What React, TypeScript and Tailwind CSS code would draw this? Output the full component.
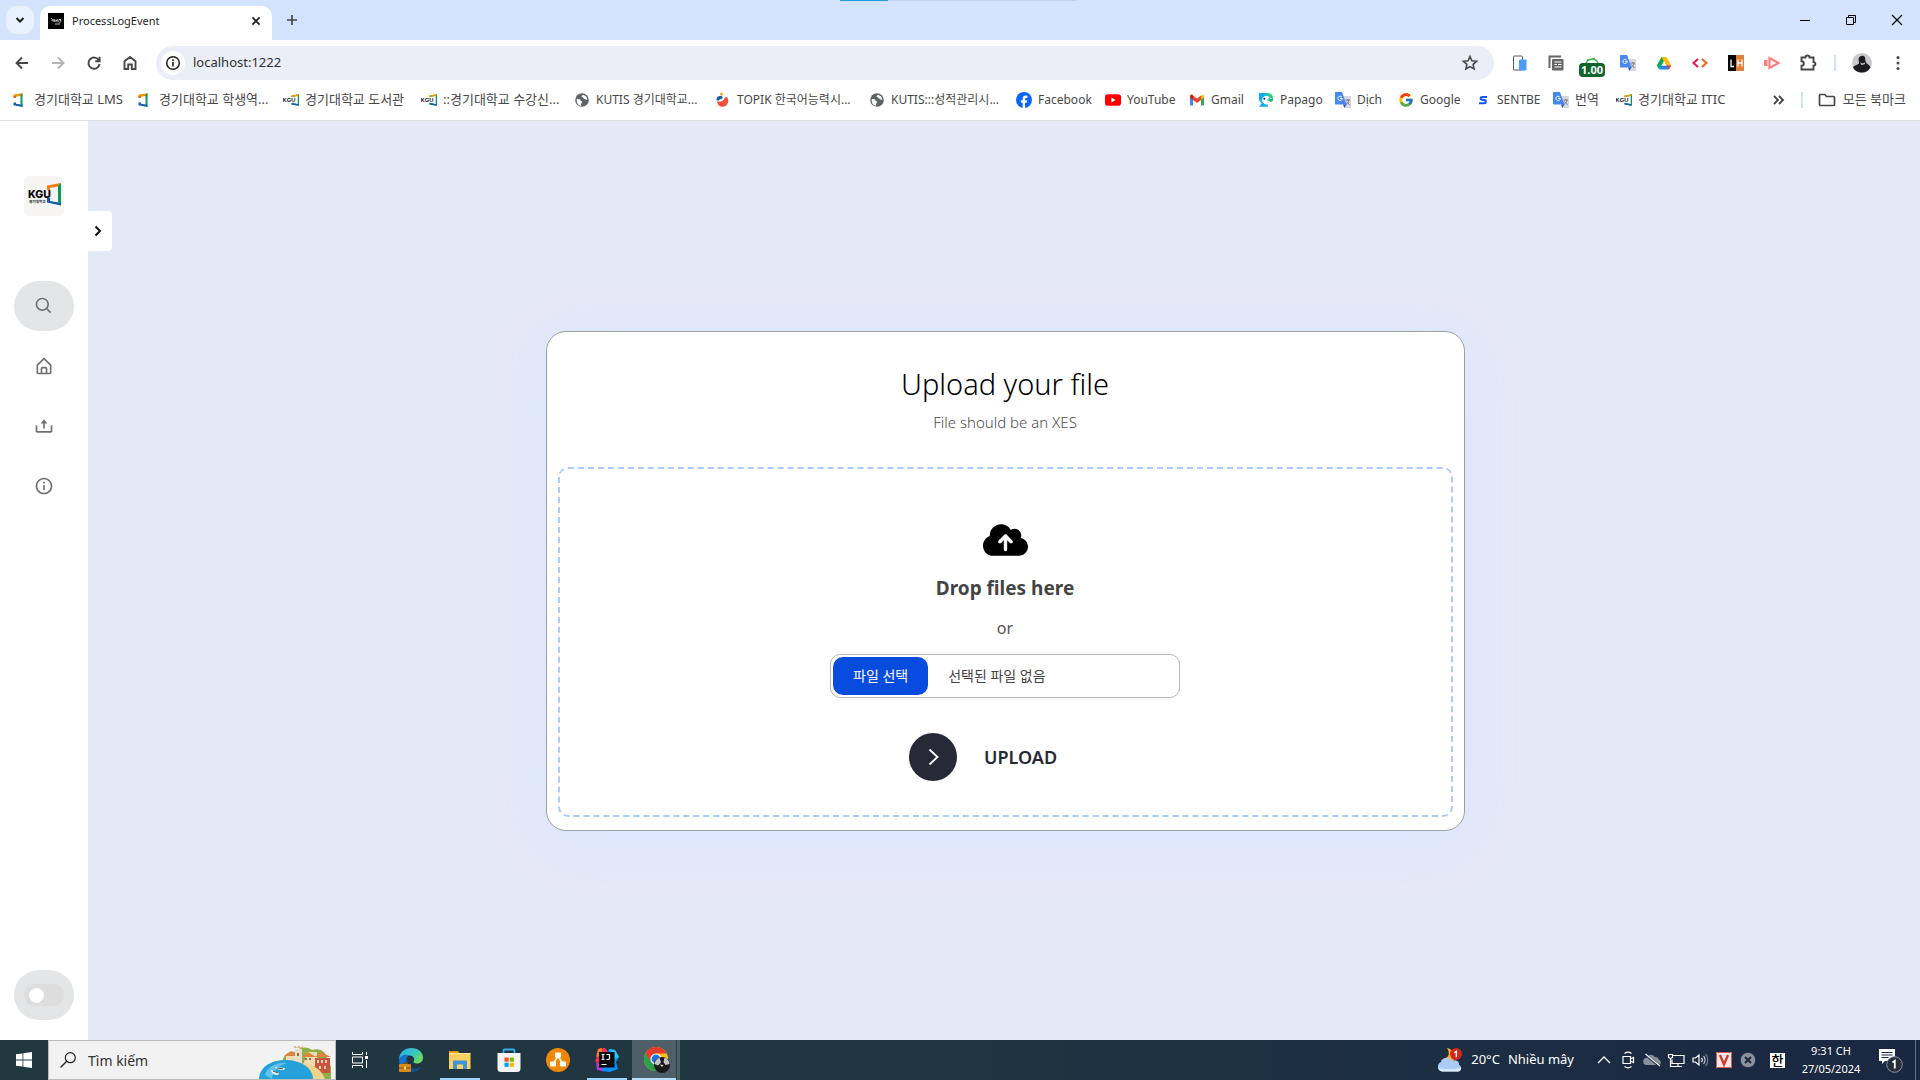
import React, { useState } from "react";
import { FaCloudArrowUp } from "react-icons/fa6";
import { FcGoogle } from "react-icons/fc";

/* ---------- small drawings ---------- */

type IconProps = { className?: string };

const Gate = ({ className = "size-4" }: IconProps) => (
  <svg viewBox="0 0 16 16" className={className} aria-hidden="true">
    <path d="M1.500 2.600 10.500 1.200v2.600L4 4.800v1H1.500z" fill="#f39800" />
    <path d="M1.500 4.200H4v1.600H1.500z" fill="#e5522b" />
    <path d="M8.500 2.400 10.500 1.200v13.800L8.500 13.200z" fill="#0a9a57" />
    <path d="M1.500 10.600H4v1.200l6.500 1V15L1.500 13.200z" fill="#1560ac" />
  </svg>
);

const KguMark = ({ className = "size-4" }: IconProps) => (
  <svg viewBox="0 0 16 16" className={className} aria-hidden="true">
    <path d="M8.500 4.400 15.400 3v10l-6.900-1.400" fill="none" stroke="#0a9a57" strokeWidth="1.400" />
    <path d="M8.500 4.400 15.400 3" stroke="#f39800" strokeWidth="1.600" />
    <path d="M8.500 11.600 15.400 13" stroke="#1560ac" strokeWidth="1.600" />
    <text x="-.4" y="10.2" fontSize="5.800" fontWeight="900" fontFamily="Liberation Sans" fill="#111">KGU</text>
  </svg>
);

const Globe = () => (
  <svg viewBox="0 0 16 16" className="size-4" aria-hidden="true">
    <circle cx="8" cy="8" r="6.800" fill="#5f6368" />
    <path d="M2.700 7c1.800.2 3.500 0 3.800 1.400.2 1 1.800.4 1.700 1.700-.1 1-1.300 1.100-1.200 2.600.1.800-.4 1.200-.9 1C3.600 12.800 2.300 10 2.700 7z" fill="#fff" />
    <path d="M8.700 2.900c-1 .8-1.500 1.400-.7 2.100.9.700 1.300.3 1.700 1.200.4 1 1.500.7 2.200 1.300.6.5 1.100.5 1.400.1C13.300 4.900 11 3 8.700 2.900z" fill="#fff" />
  </svg>
);

const Topik = () => (
  <svg viewBox="0 0 16 16" className="size-4" aria-hidden="true">
    <circle cx="6.500" cy="2.200" r="1.400" fill="#f5a623" />
    <path d="M1.500 7c0-2 2-3.300 4.200-3.100 2 .2 2.600 1.400 1.600 2.400C6 7.500 4.400 7 3.800 8.600 2.400 8.800 1.500 8.300 1.500 7z" fill="#17599c" />
    <path d="M2.500 9.300c2.500.7 6 .2 7-3.300.6-1.200 2.200-1.400 3-.2 1.600 2.600.7 6.500-2 8.200-2.600 1.500-5.800.6-7.200-1.300-.8-1-1.300-2.900-.8-3.400z" fill="#f0503c" />
  </svg>
);

const Facebook = () => (
  <svg viewBox="0 0 16 16" className="size-4" aria-hidden="true">
    <circle cx="8" cy="8" r="8" fill="#0866ff" />
    <path d="M6.700 16v-5.300H4.900V8.200h1.800V7.100c0-2.500 1.100-3.500 3.300-3.500.4 0 1.100.1 1.400.2v2.100h-.9c-1.100 0-1.500.5-1.500 1.500v.8h2.200l-.4 2.500H9v5.300z" fill="#fff" />
  </svg>
);

const YouTube = () => (
  <svg viewBox="0 0 16 16" className="size-4" aria-hidden="true">
    <rect y="2.300" width="16" height="11.400" rx="2.800" fill="#f00" />
    <path d="M6.400 5.600v4.800L10.600 8z" fill="#fff" />
  </svg>
);

const Gmail = () => (
  <svg viewBox="0 0 16 16" className="size-4" aria-hidden="true">
    <path d="M1 4v8.700c0 .5.400.8.800.8H4V7z" fill="#4285f4" />
    <path d="M12 7v6.500h2.200c.5 0 .8-.4.800-.8V4z" fill="#34a853" />
    <path d="M12 3.400 15 3v2.200L12 8z" fill="#fbbc04" />
    <path d="M4 8V3.400l4 3 4-3V8l-4 3z" fill="#ea4335" />
    <path d="M1 4.200C1 2.700 2.700 2 3.800 3L4 3.200V8L1 5.600z" fill="#c5221f" />
  </svg>
);

const Papago = () => (
  <svg viewBox="0 0 16 16" className="size-4" aria-hidden="true">
    <path d="M1 1h8c3 0 5 1.500 5.700 4L9 8l1 6.800H1L3.500 11.500 1 8z" fill="#12a9f5" />
    <path d="M7 1h2c3.500 0 5.800 2.300 6 5.500l-4-1.500z" fill="#22d86b" />
    <path d="M4 8a4.300 4.300 0 0 1 7.500-2.800L8.800 8l4.200 1.500c-1 3-4 3.800-6.500 2.500S4 9.500 4 8z" fill="#fff" />
    <path d="m9 8 6-2c.4 2.400-.6 3.500-2 4z" fill="#10c060" />
    <circle cx="6.300" cy="6.800" r="1" fill="#123" />
  </svg>
);

const Translate = () => (
  <svg viewBox="0 0 16 16" className="size-4" aria-hidden="true">
    <path d="M6.500 4H15c.6 0 1 .4 1 1v10c0 .6-.4 1-1 1H9.500z" fill="#d5d8dc" />
    <path d="M1 0h6l4.500 12.500H1c-.6 0-1-.4-1-1V1c0-.6.400-1 1-1z" fill="#4688f1" />
    <path d="M8 12.500h3.500L9.300 16z" fill="#2a56c6" />
    <path d="M10.500 8H15M12.700 7v1M14 8c-.3 2-1.500 3.500-3 4.300M11.700 9.500c.6 1.400 1.800 2.600 3 3" stroke="#667" fill="none" strokeWidth=".8" />
    <path d="M6.700 4.900a2.200 2.200 0 1 0 .6 1.500H5" stroke="#fff" fill="none" strokeWidth="1" />
  </svg>
);

const Sentbe = () => (
  <svg viewBox="0 0 16 16" className="size-4" aria-hidden="true">
    <path d="M12 5H7.500c-2.400 0-2.500 2.800-.2 3h1.900c2.300.1 2.200 3.200-.2 3.200H4" fill="none" stroke="#1556f5" strokeWidth="2" />
  </svg>
);

const Folder = () => (
  <svg viewBox="0 0 20 16" className="h-4 w-5" aria-hidden="true">
    <path d="M3 2.500h4.800L9.600 4.500H16.500a1 1 0 0 1 1 1v7a1 1 0 0 1-1 1h-13a1 1 0 0 1-1-1V3.500z" fill="none" stroke="#474747" strokeWidth="1.700" strokeLinejoin="round" />
  </svg>
);

const Line = ({ d, className = "size-5", w = 1.8 }: { d: string; className?: string; w?: number }) => (
  <svg viewBox="0 0 20 20" className={className} fill="none" stroke="currentColor" strokeWidth={w} aria-hidden="true">
    <path d={d} />
  </svg>
);

const Solid = ({ d, className = "size-5" }: { d: string; className?: string }) => (
  <svg viewBox="0 0 24 24" className={className} fill="currentColor" aria-hidden="true">
    <path d={d} />
  </svg>
);

/* ---------- browser frame ---------- */

function TabStrip() {
  return (
    <div className="relative flex h-10 items-end bg-[#d3e3fd]">
      <div className="absolute top-0 left-[840px] flex h-px w-[236px] bg-[#c3d3ea]">
        <span className="w-12 bg-[#1a9fdb]" />
      </div>
      <button aria-label="Search tabs" className="mb-1.5 ml-1.5 flex size-7 items-center justify-center rounded-[10px] bg-[#e9f1fe] text-[#1f1f1f]">
        <Line d="m6.500 8 3.500 3.500L13.500 8" className="size-5" w={2} />
      </button>
      <div className="ml-1.5 flex h-[34px] w-58 items-center rounded-t-[10px] bg-white px-2 pb-1">
        <svg viewBox="0 0 16 16" className="size-4" aria-hidden="true">
          <rect width="16" height="16" />
          <path d="M3 5c1 2 2 2 3 2M3.500 7.500 6 8M6 6l1 3M8 6.500v2.500M8 8l2-1.500v3M11 6.500h2M11 9c1 .6 2 0 2-1s-2-.8-2-1.500M7 11h5" stroke="#ddd" fill="none" strokeWidth=".9" />
        </svg>
        <span className="ml-2 flex-1 text-[11px] text-[#1f1f1f]">ProcessLogEvent</span>
        <button aria-label="Close tab" className="text-[#1f1f1f]">
          <Line d="m5.500 5.500 9 9M14.500 5.500l-9 9" className="size-4" w={2.200} />
        </button>
      </div>
      <button aria-label="New tab" className="mb-2.5 ml-2.5 text-[#474747]">
        <Line d="M10 5v10M5 10h10" w={1.700} />
      </button>
      <div className="ml-auto flex h-10 text-black">
        <button aria-label="Minimize" className="flex w-[46px] items-center justify-center">
          <Line d="M5 10.500h10" w={1} />
        </button>
        <button aria-label="Restore" className="flex w-[46px] items-center justify-center">
          <Line d="M5.500 7.500h7v7h-7zM7.500 7V5.500h7v7H13" w={1} />
        </button>
        <button aria-label="Close" className="flex w-[46px] items-center justify-center">
          <Line d="m5 5 10 10M15 5 5 15" w={1.100} />
        </button>
      </div>
    </div>
  );
}

const extensions = [
  {
    name: "Device preview",
    art: (
      <>
        <rect x="1.500" y="1" width="9" height="14" rx="1" fill="#fff" stroke="#4a5a78" />
        <rect x="7" y="4.500" width="7.500" height="11" rx="1" fill="#4d9df8" />
      </>
    ),
  },
  {
    name: "Copy",
    art: (
      <>
        <path d="M1.500 13V1.500H13" fill="none" stroke="#666" strokeWidth="2" />
        <rect x="4" y="4" width="11.500" height="11.500" rx="1" fill="#666" />
        <path d="M6.500 7h7M10 9.500h3.500M6.500 12h7M6.500 9.500H9" stroke="#fff" strokeWidth="1.200" />
      </>
    ),
  },
  { name: "Speed", art: null },
  { name: "Translate", art: null },
  {
    name: "Drive",
    art: (
      <>
        <path d="M5.500 2h5L5.300 11 3.200 14.500.8 10.500z" fill="#0da95f" />
        <path d="M5.500 2h5l4.700 8.500h-5z" fill="#ffba00" />
        <path d="M5.500 10.500h9.700L12.800 14.500H3.200z" fill="#2684fc" />
        <path d="M12 13.500 10.200 10.500h5L12.800 14.500z" fill="#ea4335" />
        <path d="M8 6.300 5.700 10.500h4.700z" fill="#fff" />
      </>
    ),
  },
  {
    name: "Code",
    art: (
      <>
        <path d="M6 4 1.500 8 6 12" fill="none" stroke="#e4145c" strokeWidth="2" />
        <path d="M10 4l4.500 4-4.500 4" fill="none" stroke="#f0601c" strokeWidth="2" />
      </>
    ),
  },
  {
    name: "LH",
    art: (
      <>
        <path d="M0 0h8v16H0z" fill="#000" />
        <path d="M8 0h8v16H8z" fill="#e0803a" />
        <path d="M3 4.500v7h3M10 4.500v7M14 4.500v7M10 8h4" fill="none" stroke="#fff" strokeWidth="1.300" />
      </>
    ),
  },
  {
    name: "Recorder",
    art: (
      <>
        <path d="M0 5h3.500v6H0z" fill="#ff7d7d" />
        <path d="M5.500 3v10L14.500 8z" fill="none" stroke="#ff7d7d" strokeWidth="2.200" />
      </>
    ),
  },
];

function Toolbar() {
  return (
    <div className="flex h-[46px] items-center bg-white px-3 text-[#474747]">
      <div className="flex gap-4">
        <button aria-label="Back"><Line d="M16 10H5M10 4.500 4.500 10l5.500 5.500" w={1.900} /></button>
        <button aria-label="Forward" className="text-[#b4b4b4]"><Line d="M4 10h11M10 4.500l5.500 5.500-5.500 5.500" w={1.900} /></button>
        <button aria-label="Reload"><Line d="M15 7.500A5.600 5.600 0 1 0 15.600 11M15.600 3.800v4.400h-4.400" w={1.900} /></button>
        <button aria-label="Home"><Line d="M4.500 16V8.200L10 4l5.500 4.200V16h-3.700v-4.500H8.200V16z" w={1.900} /></button>
      </div>
      <div className="ml-4 flex h-[34px] flex-1 items-center rounded-full bg-[#ebeef7] pr-3.5 pl-[5px]">
        <button aria-label="Site information" className="flex size-6 items-center justify-center rounded-full bg-white text-[#1f1f1f]">
          <svg viewBox="0 0 16 16" className="size-4" aria-hidden="true">
            <circle cx="8" cy="8" r="6.300" fill="none" stroke="currentColor" strokeWidth="1.500" />
            <path d="M8 7v4.500M8 4.300V6" stroke="currentColor" strokeWidth="1.600" />
          </svg>
        </button>
        <input aria-label="Address" defaultValue="localhost:1222" className="ml-2 flex-1 bg-transparent text-[13px] text-[#303030] outline-none" />
        <button aria-label="Bookmark this page">
          <Line d="m10 3.500 1.900 4.300 4.700.5-3.500 3.100 1 4.600-4.100-2.400L5.900 16l1-4.600-3.500-3.100 4.700-.5z" w={1.600} />
        </button>
      </div>
      <div className="ml-3.5 flex items-center gap-3">
        {extensions.map((e) => (
          <button key={e.name} aria-label={e.name} className="flex size-6 items-center justify-center">
            {e.name === "Translate" ? (
              <Translate />
            ) : e.name === "Speed" ? (
              <span className="flex flex-col items-center pt-2">
                <svg viewBox="0 0 16 6" className="h-1.5 w-4" aria-hidden="true">
                  <path d="M2 6c2-5 10-5 12 0M3 3l8-1.500" fill="none" stroke="#4caf50" strokeWidth="1.400" />
                </svg>
                <span className="rounded-[4px] bg-[#0d652d] px-0.5 text-[11px] leading-[14px] font-bold text-white">1.00</span>
              </span>
            ) : (
              <svg viewBox="0 0 16 16" className="size-4" aria-hidden="true">{e.art}</svg>
            )}
          </button>
        ))}
        <button aria-label="Extensions" className="flex size-6 items-center justify-center">
          <Line d="M3.500 4.500h4a2 2 0 0 1 4 0H15.500v4.600a1.800 1.800 0 0 1 0 3.600V16.500h-12v-3.700a2.300 2.300 0 0 0 0-4.600z" w={1.900} />
        </button>
      </div>
      <span className="ml-3.5 h-4 w-0.5 bg-[#d3e3fd]" />
      <button aria-label="Profile" className="ml-4">
        <svg viewBox="0 0 20 20" className="size-5" aria-hidden="true">
          <circle cx="10" cy="10" r="10" fill="#c9c9cb" />
          <path d="M1 14.500c2-3 4-2 6-4 .4-2-1.500-4.500.5-6.500 2-2 5-1.500 5.500.5.2 1.500.2 3 .7 4.500 1 2 3.300 2.500 4.800 5.300A10 10 0 0 1 1 14.500z" fill="#1c1c20" />
          <path d="M8 9c1 1.500 3 2 4.500.5l.5 1.500-3.500 1z" fill="#e6dad4" />
        </svg>
      </button>
      <button aria-label="Menu" className="ml-4">
        <svg viewBox="0 0 20 20" className="size-5" fill="currentColor" aria-hidden="true">
          <circle cx="10" cy="4.500" r="1.500" /><circle cx="10" cy="10" r="1.500" /><circle cx="10" cy="15.500" r="1.500" />
        </svg>
      </button>
    </div>
  );
}

const bookmarks = [
  { label: "경기대학교 LMS", icon: <Gate />, style: "w-[125px] text-[13px]" },
  { label: "경기대학교 학생역...", icon: <Gate />, style: "w-[146px] text-[13px]" },
  { label: "경기대학교 도서관", icon: <KguMark />, style: "w-[138px] text-[13px]" },
  { label: "::경기대학교 수강신...", icon: <KguMark />, style: "w-[153px] text-[13px]" },
  { label: "KUTIS 경기대학교...", icon: <Globe />, style: "w-[141px]" },
  { label: "TOPIK 한국어능력시...", icon: <Topik />, style: "w-[154px]" },
  { label: "KUTIS:::성적관리시...", icon: <Globe />, style: "w-[147px]" },
  { label: "Facebook", icon: <Facebook />, style: "w-[89px]" },
  { label: "YouTube", icon: <YouTube />, style: "w-[84px]" },
  { label: "Gmail", icon: <Gmail />, style: "w-[69px]" },
  { label: "Papago", icon: <Papago />, style: "w-[77px]" },
  { label: "Dịch", icon: <Translate />, style: "w-[63px]" },
  { label: "Google", icon: <FcGoogle className="size-4" />, style: "w-[77px]" },
  { label: "SENTBE", icon: <Sentbe />, style: "w-[78px]" },
  { label: "번역", icon: <Translate />, style: "w-[63px] text-[13px]" },
  { label: "경기대학교 ITIC", icon: <KguMark />, style: "w-[125px] text-[13px]" },
];

function Bookmarks() {
  return (
    <nav aria-label="Bookmarks" className="flex h-[35px] items-center border-b border-[#dfe1e5] bg-white pr-3.5 pb-1.5 pl-3 text-[12px] text-[#474747]">
      {bookmarks.map((b) => (
        <a key={b.label} href="#" className={`flex shrink-0 items-center gap-1.5 whitespace-nowrap ${b.style}`}>
          <span className="shrink-0">{b.icon}</span>
          {b.label}
        </a>
      ))}
      <button aria-label="More bookmarks" className="ml-auto">
        <Line d="m5 6 4 4-4 4M10 6l4 4-4 4" w={1.900} />
      </button>
      <span className="ml-3 h-4 w-0.5 bg-[#d3e3fd]" />
      <a href="#" className="ml-3.5 flex items-center gap-1.5 text-[13px] whitespace-nowrap">
        <Folder />모든 북마크
      </a>
    </nav>
  );
}

/* ---------- page ---------- */

const navItems = [
  { label: "Home", d: "M5 22h14a2 2 0 0 0 2-2v-9a1 1 0 0 0-.29-.71l-8-8a1 1 0 0 0-1.410 0l-8 8A1 1 0 0 0 3 11v9a2 2 0 0 0 2 2zm5-2v-5h4v5zm-5-8.590 7-7 7 7V20h-3v-5a2 2 0 0 0-2-2h-4a2 2 0 0 0-2 2v5H5z" },
  { label: "Upload", d: "M11 15h2V9h3l-4-5-4 5h3zM20 18H4v-7H2v7c0 1.103.897 2 2 2h16c1.103 0 2-.897 2-2v-7h-2z" },
  { label: "Information", d: "M12 2C6.486 2 2 6.486 2 12s4.486 10 10 10 10-4.486 10-10S17.514 2 12 2zm0 18c-4.411 0-8-3.589-8-8s3.589-8 8-8 8 3.589 8 8-3.589 8-8 8zM11 11h2v6h-2zM11 7h2v2h-2z" },
];

function Sidebar() {
  return (
    <aside className="relative flex w-22 shrink-0 flex-col items-center bg-white pt-[55px] pb-5 text-[#707070]">
      <div className="flex size-10 items-center justify-center rounded-md bg-[#f6f5f4]">
        <svg viewBox="0 0 40 40" className="size-10" role="img" aria-label="KGU">
          <path d="M23 9.500 37 7v3l-11 2v2h-3z" fill="#ee7f1a" />
          <path d="M34 10l3-3v22l-3-3z" fill="#0a9a57" />
          <path d="M23 22h3v3l11 2v2.500L23 26.500z" fill="#1358a5" />
          <text x="4" y="21.800" fontSize="10.500" fontWeight="800" fontFamily="Inter" fill="#000">KGU</text>
          <text x="5" y="26.500" fontSize="3.600" fontWeight="700" fontFamily="Noto Sans CJK KR" fill="#222">경기대학교</text>
        </svg>
      </div>
      <button aria-label="Expand sidebar" className="absolute top-[90px] left-full z-10 flex h-10 w-6 items-center rounded-r-[4px] bg-white text-[#11101d]">
        <Line d="m7.500 5.500 4.500 4.500-4.500 4.500" w={2} />
      </button>
      <button aria-label="Search" className="mt-[65px] flex h-[50px] w-15 items-center justify-center rounded-[25px] bg-[#e4e5e6]">
        <Solid d="M10 18a7.952 7.952 0 0 0 4.897-1.688l4.396 4.396 1.414-1.414-4.396-4.396A7.952 7.952 0 0 0 18 10c0-4.411-3.589-8-8-8s-8 3.589-8 8 3.589 8 8 8zm0-14c3.309 0 6 2.691 6 6s-2.691 6-6 6-6-2.691-6-6 2.691-6 6-6z" />
      </button>
      <nav className="mt-2.5 flex flex-col gap-2.5">
        {navItems.map((n) => (
          <a key={n.label} href="#" aria-label={n.label} className="flex h-[50px] w-15 items-center justify-center">
            <Solid d={n.d} />
          </a>
        ))}
      </nav>
      <label className="mt-auto flex h-[50px] w-15 cursor-pointer items-center justify-center rounded-[25px] bg-[#e4e5e6]">
        <input type="checkbox" role="switch" aria-label="Dark mode" className="peer sr-only" />
        <span className="flex h-[22px] w-10 items-center rounded-full bg-[#ddd] pl-[5px] peer-checked:justify-end">
          <span className="size-[15px] rounded-full bg-white" />
        </span>
      </label>
    </aside>
  );
}

function UploadCard() {
  const [fileName, setFileName] = useState("선택된 파일 없음");
  return (
    <form
      onSubmit={(e) => e.preventDefault()}
      className="w-full max-w-[919px] rounded-[20px] border border-[#9f9f9f] bg-white px-[11px] pt-[30px] pb-[13px] text-center shadow-[0_10px_60px_rgb(218,229,255)]"
    >
      <h1 className="text-[29px] leading-[44px] font-light text-black">Upload your file</h1>
      <p className="mt-1.5 text-[15px] leading-5 font-light text-[#4c4c4c]">File should be an XES</p>
      <div className="mt-[35px] flex flex-col items-center rounded-[10px] border-2 border-dashed border-[#abcaff] pt-[53px] pb-[34px]">
        <FaCloudArrowUp className="h-9 w-[45px] text-black" />
        <p className="mt-3.5 text-[19px] leading-8 font-bold text-[#444]">Drop files here</p>
        <p className="mt-3 text-[16px] leading-6 text-[#555]">or</p>
        <label className="mt-3.5 flex h-11 w-[350px] cursor-pointer items-center rounded-[10px] border border-[#b9b9b9] p-0.5 text-[14px] text-[#444]">
          <input
            type="file"
            accept=".xes"
            className="sr-only"
            onChange={(e) => setFileName(e.target.files?.[0]?.name ?? "선택된 파일 없음")}
          />
          <span className="flex h-[38px] items-center rounded-[10px] bg-[#084cdf] px-5 text-white">파일 선택</span>
          <span className="ml-5">{fileName}</span>
        </label>
        <button type="submit" className="mt-[35px] flex w-48 items-center">
          <span className="flex size-12 items-center justify-center rounded-full bg-[#282936] text-white">
            <Line d="m6.500 2.500 8 7.500-8 7.500" className="size-5" w={1.800} />
          </span>
          <span className="ml-[27px] text-[18px] leading-6 font-semibold text-[#282936]">UPLOAD</span>
        </button>
      </div>
    </form>
  );
}

/* ---------- task bar ---------- */

const EdgeIcon = () => (
  <svg viewBox="0 0 24 24" className="size-6" aria-hidden="true">
    <defs>
      <linearGradient id="edgeTop" x1="0" y1="0" x2="1" y2=".6"><stop offset="0" stopColor="#2fa8e8" /><stop offset=".6" stopColor="#35c6c4" /><stop offset="1" stopColor="#6bdc5e" /></linearGradient>
    </defs>
    <path d="M0 12C0 4 6 0 12 0c8 0 12 5 12 9.500 0 4-3 6-6 6-2.500 0-4-1-3.500-2 1.500-1.500 1-6-4-6C5 7.500 1 9 0 12z" fill="url(#edgeTop)" />
    <path d="M0 12c1-5 7-6 10.500-4.500C8 8 7 11 7.500 14c.7 4 4 7 8 7 2 0 4-.5 6-2-2 3.500-5.500 5-9.500 5C5 24 0 19 0 12z" fill="#1673c9" />
    <path d="M9 11c-2 5 1.500 9.500 6.500 10 2.500 0 4.500-.8 6-2-3 5-9 5.500-12 4.500C4 21 5 14 9 11z" fill="#0f4f98" />
    <path d="M4 14.500h5v2H4z" fill="#7c4a12" />
    <rect y="16" width="12" height="8" rx=".8" fill="#d68a1f" />
    <path d="M0 19.500h12v1H0z" fill="#8a5310" />
    <path d="M5 18.500h2v3H5z" fill="#ffd77a" />
  </svg>
);

const ExplorerIcon = () => (
  <svg viewBox="0 0 24 24" className="size-6" aria-hidden="true">
    <path d="M1 3h9l1.500 2H1z" fill="#e0a010" />
    <path d="M1 5h21.500v16H1z" fill="#fbd160" />
    <path d="M1 5h21.500v1H1z" fill="#fde297" />
    <path d="M5 21v-7.500c0-.6.400-1 1-1h12c.6 0 1 .4 1 1V21h-4v-4.500H9V21z" fill="#3f94dc" />
  </svg>
);

const StoreIcon = () => (
  <svg viewBox="0 0 24 24" className="size-6" aria-hidden="true">
    <path d="M6.500 6V2.500c0-.6.400-1 1-1h9c.6 0 1 .4 1 1V6" fill="none" stroke="#2fb0ee" strokeWidth="1.800" />
    <path d="M.5 5h23v15.500A3.500 3.500 0 0 1 20 24H4a3.500 3.500 0 0 1-3.500-3.500z" fill="#f4f4f5" />
    <path d="M7.500 9.500h4.200v4.200H7.500z" fill="#f25022" /><path d="M12.700 9.500h4.200v4.200h-4.200z" fill="#7fba00" />
    <path d="M7.500 14.700h4.200v4.200H7.500z" fill="#00a4ef" /><path d="M12.700 14.700h4.200v4.200h-4.200z" fill="#ffb900" />
  </svg>
);

const DrawIcon = () => (
  <svg viewBox="0 0 24 24" className="size-6" aria-hidden="true">
    <circle cx="12" cy="12" r="12" fill="#f08705" />
    <path d="m12 8-5 8M12 8l5 8" stroke="#fff" strokeWidth="1.500" />
    <rect x="9" y="4.500" width="6" height="5" rx=".8" fill="#fff" /><rect x="4" y="13.500" width="6" height="5" rx=".8" fill="#fff" /><rect x="14" y="13.500" width="6" height="5" rx=".8" fill="#fff" />
  </svg>
);

const IdeaIcon = () => (
  <svg viewBox="0 0 24 24" className="size-6" aria-hidden="true">
    <path d="M3 1 10 0l5 6-6 12-9-5 2-4z" fill="#fe2857" />
    <path d="M3 1 7 0v7L1 9z" fill="#fc801d" />
    <path d="m14 1 6 1 4 7-3 5 2 7-8 3-9-1z" fill="#0a8cfa" />
    <path d="m14 1 6 1 4 7-4 2z" fill="#21c8f8" />
    <path d="m1 14 4 2 3 7-6-1z" fill="#b83bd8" />
    <path d="M4 4h15.500v15.500H4z" fill="#0b0b0f" />
    <path d="M6.500 6.500h3M8 6.500v5M6.500 11.500h3M11.500 6.500h3v4c0 1-2 1.300-3 .7M6.500 16.500h5" stroke="#fff" strokeWidth="1.200" fill="none" />
  </svg>
);

const ChromeIcon = () => (
  <svg viewBox="0 0 26 26" className="size-[26px]" aria-hidden="true">
    <circle cx="12" cy="12" r="12" fill="#fbc116" />
    <path d="M1.600 6A12 12 0 0 0 12 24l5.200-9H12z" fill="#2ba24c" />
    <path d="M12 6.500h10.700A12 12 0 0 0 1.600 6L7 15z" fill="#e33b2e" />
    <circle cx="12" cy="12" r="5.600" fill="#fff" /><circle cx="12" cy="12" r="4.400" fill="#1a73e8" />
    <circle cx="18" cy="18" r="8" fill="#1a1a1c" />
    <path d="M10.500 17c.5-3 2.500-5.500 5-6.500l1.500 5-3 3zM20.500 10.500c3 1 5 4 5 6.500l-4 1-2-3z" fill="#c4c4c6" />
    <path d="m16 17.500 3.500.5-1.500 2z" fill="#e6dad4" />
  </svg>
);

const SearchArt = () => (
  <svg viewBox="0 0 76 34" className="h-[34px] w-[76px]" aria-hidden="true">
    <path d="M24 14c2-6 8-8 12-7 4-5 12-6 17-2 5-2 12 0 14 5l5 12v12H24z" fill="#8fb046" />
    <path d="M27 10h12v8H27zM48 7h10v14H44z" fill="#eddcb2" />
    <path d="m25 11 7-5 9 5zM56 12l6-5 10 5zM43 12l6-5 8 5z" fill="#dc8444" />
    <path d="M36 4h7v14h-7z" fill="#e9dfc9" /><path d="M35 3V1h2v1h2V1h2v1h2V1h1v2z" fill="#cdbf9f" />
    <path d="M56 13h15v15H56z" fill="#c8553d" />
    <path d="M58 15h2v3h-2zM62 15h2v3h-2zM66 15h2v3h-2zM60 21h2v3h-2zM65 21h2v3h-2z" fill="#f3ceb0" />
    <path d="M46 13h2v2h-2zM50 13h2v2h-2zM38 8h2v3h-2z" fill="#8b6b4a" />
    <path d="M36 18c14-1 26 4 30 16H46z" fill="#f0d38c" />
    <path d="M0 34c0-10 10-19 26-19s28 8 28 19z" fill="#25a0da" />
    <path d="M6 30c2-8 12-13 22-12-8 2-14 8-15 16z" fill="#62c3ec" />
    <path d="m12 25 8 3-1 2c-4 0-7-2-7-5zM16 22l10 1-1 2c-4 .5-8-1-9-3z" fill="#f2f2ee" />
    <path d="m14 26 5 2M18 23l6 .8" stroke="#4a5560" />
  </svg>
);

const apps = [
  { name: "Edge", icon: <EdgeIcon />, open: false },
  { name: "File Explorer", icon: <ExplorerIcon />, open: true },
  { name: "Store", icon: <StoreIcon />, open: false },
  { name: "Diagrams", icon: <DrawIcon />, open: false },
  { name: "IDE", icon: <IdeaIcon />, open: true },
];

function Taskbar() {
  return (
    <footer className="flex h-10 shrink-0 items-stretch bg-linear-to-r from-[#203840] via-[#1f3541] to-[#1a2742] text-white">
      <button aria-label="Start" className="flex w-12 items-center justify-center">
        <svg viewBox="0 0 16 16" className="size-4" fill="#fff" aria-hidden="true">
          <path d="M0 2.300 6.500 1.400v6.200H0zM7.300 1.300 16 0v7.600H7.300zM0 8.400h6.500v6.200L0 13.700zM7.300 8.400H16V16l-8.700-1.300z" />
        </svg>
      </button>
      <div className="flex h-10 w-72 items-center overflow-hidden border border-[#b9bcbe] bg-[#f2f2f2] pl-[11px]">
        <svg viewBox="0 0 16 16" className="size-4 shrink-0" aria-hidden="true">
          <circle cx="10.300" cy="5.700" r="5" fill="none" stroke="#222" strokeWidth="1.200" />
          <path d="M6.700 9.300 0.500 15.500" stroke="#222" strokeWidth="1.300" />
        </svg>
        <input aria-label="Tìm kiếm" placeholder="Tìm kiếm" className="ml-3 w-40 flex-1 bg-transparent text-[14px] outline-none placeholder:text-[#333]" />
        <span className="mt-1 shrink-0"><SearchArt /></span>
      </div>
      <button aria-label="Task view" className="flex w-12 items-center justify-center">
        <svg viewBox="0 0 16 16" className="size-4" fill="none" stroke="#fff" aria-hidden="true">
          <path d="M.5 0v2.500h10V0M.5 16v-2.500h10V16M.5 5h10v6H.5zM14.500 0v3M14.500 8v8" />
          <path d="M13 4h3v3h-3z" fill="#fff" stroke="none" />
        </svg>
      </button>
      <div className="ml-0.5 flex">
        {apps.map((a) => (
          <button key={a.name} aria-label={a.name} className="relative flex w-[49px] items-center justify-center">
            {a.icon}
            {a.open && <span className="absolute bottom-0 h-0.5 w-10 bg-[#9cd3fa]" />}
          </button>
        ))}
      </div>
      <button aria-label="Chrome" className="relative ml-px flex w-11 items-center justify-center bg-[#4d6068] pl-1.5">
        <ChromeIcon />
        <span className="absolute bottom-0 left-0 h-0.5 w-full bg-[#b5e0ff]" />
      </button>
      <span className="w-1 border-l border-[#2b3f47] bg-[#4d6068]" />

      <div className="ml-auto flex items-center">
        <button className="flex items-center gap-2 text-[13px]">
          <svg viewBox="0 0 26 24" className="h-6 w-[26px]" aria-hidden="true">
            <path d="M10 0c4 6 1 11-6 12 2 4 12 4 14-2 1-4-3-9-8-10z" fill="#f5b43a" />
            <path d="M5 23.500a5 5 0 0 1-1-9.500c1-5 9-6 11-1 4-2 8 1 7 4 4 2 2 6.500-1 6.500z" fill="#a9cdf6" />
            <path d="M5 23.500a5 5 0 0 1-4-4c5 2 17 2 23 0 0 2.500-1 4-3 4z" fill="#d7e8fc" />
            <circle cx="19" cy="6" r="6" fill="#d3271c" />
            <path d="m17.300 4.700 2-1.500v6" fill="none" stroke="#fff" strokeWidth="1.300" />
          </svg>
          <span>20°C</span><span>Nhiều mây</span>
        </button>
        <div className="ml-5 flex items-center gap-1">
          <button aria-label="Hidden icons"><Line d="m4 13 6-6 6 6" w={1.400} /></button>
          <button aria-label="Camera"><Line d="M5 6.500h7.500v7H5zM12.500 9l3-1.500v5l-3-1.500M6.500 3.500c2-1.500 5-1.500 7 0M6.500 16.500c2 1.500 5 1.500 7 0" w={1.200} /></button>
          <button aria-label="Cloud">
            <svg viewBox="0 0 20 20" className="size-5" aria-hidden="true">
              <path d="M5 15a3.500 3.500 0 0 1-.5-7C6 4 11 4 12.500 7c3-.5 4 1 4 2.500 3 .5 3 5.500 0 5.500z" fill="#878f9b" />
              <path d="m3 4 14.500 12" stroke="#1a2840" strokeWidth="2.600" /><path d="m3.500 4 14.500 12" stroke="#fff" strokeWidth="1.200" />
            </svg>
          </button>
          <button aria-label="Network"><Line d="M6.500 5.500H18v8H6v-4M9 16.500h7M12 13.500v3M2.500 4.500h4v3l-2 1-2-1zM4.500 8.500v8H9" w={1.200} /></button>
          <button aria-label="Volume">
            <svg viewBox="0 0 20 20" className="size-5" fill="none" stroke="#fff" strokeWidth="1.200" aria-hidden="true">
              <path d="M3 8h2.500L9 5v10l-3.500-3H3zM11.500 8c1 1 1 3 0 4" /><path d="M13.500 6c2 2 2 6 0 8" stroke="#c6cad2" /><path d="M15.500 4c3 3 3 9 0 12" stroke="#6f7888" />
            </svg>
          </button>
          <button aria-label="Keyboard layout" className="ml-0.5 flex size-4 items-center justify-center bg-[#fbeceb]">
            <svg viewBox="0 0 16 16" className="size-4" aria-hidden="true"><path d="M.5.500h15v15H.5z" fill="#fbe9e7" stroke="#d95a50" /><path d="m4 3 4 9.500L12 3" fill="none" stroke="#d3382c" strokeWidth="2.400" /></svg>
          </button>
          <button aria-label="Status" className="ml-0.5">
            <svg viewBox="0 0 20 20" className="size-5" aria-hidden="true"><circle cx="10" cy="10" r="7.300" fill="#8b92a0" /><path d="m7 7 6 6M13 7l-6 6" stroke="#1a2538" strokeWidth="2" /></svg>
          </button>
        </div>
        <button aria-label="Input language" className="ml-3 flex size-[15px] items-center justify-center bg-white text-[13px] leading-[15px] font-medium text-black">한</button>
        <button className="ml-4 w-[60px] text-center text-[11px] leading-[18px]">
          <span className="block">9:31 CH</span><span className="block">27/05/2024</span>
        </button>
        <button aria-label="Notifications" className="ml-4">
          <svg viewBox="0 0 26 26" className="size-[26px]" aria-hidden="true">
            <path d="M2 2h16v12H8l-3 3v-3H2z" fill="#fff" /><path d="M4.500 5.500h11M4.500 8h11M4.500 10.500h7" stroke="#1a2742" strokeWidth="1.200" />
            <circle cx="17.500" cy="17.500" r="7.800" fill="#26303c" stroke="#8d949e" /><path d="m15.500 15.500 2.300-1.700v7.700" fill="none" stroke="#fff" strokeWidth="1.800" />
          </svg>
        </button>
        <span className="mr-1 ml-3 h-10 w-px bg-[#66707f]" />
      </div>
    </footer>
  );
}

export default function App() {
  return (
    <div className="flex min-h-screen flex-col bg-[#e4e9f7] font-['Noto_Sans','Noto_Sans_CJK_KR',sans-serif]">
      <TabStrip />
      <Toolbar />
      <Bookmarks />
      <div className="flex flex-1">
        <Sidebar />
        <main className="flex flex-1 items-center justify-center pl-0.5">
          <UploadCard />
        </main>
      </div>
      <Taskbar />
    </div>
  );
}
